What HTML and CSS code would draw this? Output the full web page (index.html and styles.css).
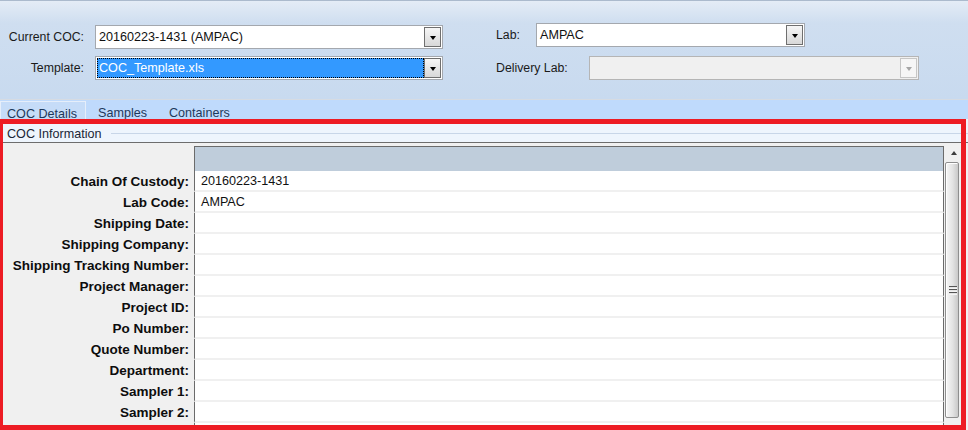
FILE: index.html
```html
<!DOCTYPE html>
<html lang="en">

<head>
    <meta charset="UTF-8">
    <title>COC Details</title>
    <link rel="stylesheet" href="styles.css">
</head>

<body>
    <div class="app">
        <div class="toolbar">
            <div class="toolbar-group group-left">
                <div class="field">
                    <label class="field-label lbl-coc">Current COC:</label>
                    <div class="combo w-coc">
                        <span class="combo-text">20160223-1431 (AMPAC)</span>
                        <span class="combo-btn"><i class="arrow"></i></span>
                    </div>
                </div>
                <div class="field">
                    <label class="field-label lbl-coc">Template:</label>
                    <div class="combo w-coc focused">
                        <span class="combo-text">COC_Template.xls</span>
                        <span class="combo-btn"><i class="arrow"></i></span>
                    </div>
                </div>
            </div>
            <div class="toolbar-group group-right">
                <div class="field">
                    <label class="field-label lbl-lab">Lab:</label>
                    <div class="combo w-lab">
                        <span class="combo-text">AMPAC</span>
                        <span class="combo-btn"><i class="arrow"></i></span>
                    </div>
                </div>
                <div class="field">
                    <label class="field-label lbl-delivery">Delivery Lab:</label>
                    <div class="combo w-delivery disabled">
                        <span class="combo-text"></span>
                        <span class="combo-btn"><i class="arrow"></i></span>
                    </div>
                </div>
            </div>
        </div>

        <!-- tabs -->
        <div class="tabs">
            <div class="tab active">COC Details</div>
            <div class="tab">Samples</div>
            <div class="tab">Containers</div>
        </div>

        <div class="group-header">
            <span>COC Information</span>
            <span class="group-line"></span>
        </div>

        <div class="sheet">
            <div class="rows">
                <div class="row head">
                    <div class="row-label"></div>
                    <div class="row-value"></div>
                </div>
                <div class="row">
                    <div class="row-label">Chain Of Custody:</div>
                    <div class="row-value">20160223-1431</div>
                </div>
                <div class="row">
                    <div class="row-label">Lab Code:</div>
                    <div class="row-value">AMPAC</div>
                </div>
                <div class="row">
                    <div class="row-label">Shipping Date:</div>
                    <div class="row-value"></div>
                </div>
                <div class="row">
                    <div class="row-label">Shipping Company:</div>
                    <div class="row-value"></div>
                </div>
                <div class="row">
                    <div class="row-label">Shipping Tracking Number:</div>
                    <div class="row-value"></div>
                </div>
                <div class="row">
                    <div class="row-label">Project Manager:</div>
                    <div class="row-value"></div>
                </div>
                <div class="row">
                    <div class="row-label">Project ID:</div>
                    <div class="row-value"></div>
                </div>
                <div class="row">
                    <div class="row-label">Po Number:</div>
                    <div class="row-value"></div>
                </div>
                <div class="row">
                    <div class="row-label">Quote Number:</div>
                    <div class="row-value"></div>
                </div>
                <div class="row">
                    <div class="row-label">Department:</div>
                    <div class="row-value"></div>
                </div>
                <div class="row">
                    <div class="row-label">Sampler 1:</div>
                    <div class="row-value"></div>
                </div>
                <div class="row">
                    <div class="row-label">Sampler 2:</div>
                    <div class="row-value"></div>
                </div>
                <div class="row">
                    <div class="row-label"></div>
                    <div class="row-value"></div>
                </div>
            </div>
            <div class="vscroll">
                <div class="vscroll-btn"><i class="arrow-up"></i></div>
                <div class="vscroll-thumb"><i class="grip"></i></div>
            </div>
        </div>

        <!-- red highlight drawn over the details panel -->
        <div class="highlight"></div>
    </div>
</body>

</html>
```

FILE: styles.css
```css
* {
    box-sizing: border-box;
    margin: 0;
    padding: 0;
}

body {
    font-family: "Liberation Sans", Arial, sans-serif;
    font-size: 12.6px;
    color: #111;
    background-color: #f0f0f0;
}

.app {
    position: relative;
    width: 968px;
    height: 430px;
    overflow: hidden;
    background-color: #f0f0f0;
}

/* Top toolbar with the combos */
.toolbar {
    display: flex;
    height: 100px;
    border-top: 1px solid #abbacd;
    border-bottom: 1px solid #d6dbe2;
    background: linear-gradient(#e4ecf6 0, #cfdef0 22px, #c8daef 100%);
}

.toolbar-group {
    display: flex;
    flex-direction: column;
}

.group-left {
    margin-left: 8px;
    padding-top: 24px;
    gap: 7px;
}

.group-right {
    margin-left: 53px;
    padding-top: 22px;
    gap: 9px;
}

.field {
    display: flex;
    align-items: center;
    height: 24px;
}

.field-label {
    font-size: 12.3px;
    color: #1a1a1a;
    white-space: nowrap;
}

.lbl-coc {
    width: 87px;
    padding-right: 11px;
    text-align: right;
}

.lbl-lab {
    width: 40px;
}

.lbl-delivery {
    width: 93px;
}

.combo {
    display: flex;
    height: 24px;
    padding: 1px;
    border: 1px solid #a4a8ae;
    background-color: #fff;
}

.w-coc {
    width: 348px;
}

.w-lab {
    width: 269px;
}

.w-delivery {
    width: 330px;
}

.combo-text {
    flex: 1;
    padding-left: 2px;
    line-height: 20px;
    white-space: nowrap;
}

.focused .combo-text {
    background-color: #3399ff;
    color: #fff;
    outline: 1px dotted #000;
    outline-offset: -1px;
}

.combo-btn {
    display: flex;
    align-items: center;
    justify-content: center;
    width: 17px;
    border: 1px solid #6f6f6f;
    background: linear-gradient(#f6f6f6, #d8d8d8);
}

.arrow {
    width: 0;
    height: 0;
    border-left: 3.5px solid transparent;
    border-right: 3.5px solid transparent;
    border-top: 4px solid #000;
    margin-top: 1px;
}

.disabled {
    background-color: #f0f0f0;
    border-color: #b5b5b5;
}

.disabled .combo-btn {
    border-color: #c6c6c6;
    background: #f6f6f6;
}

.disabled .arrow {
    border-top-color: #a6a6a6;
}

/* Tab strip */
.tabs {
    display: flex;
    align-items: flex-end;
    height: 19px;
    background-color: #bfdafc;
    color: #1e395b;
}

.tab {
    height: 18px;
    line-height: 17px;
    padding: 4px 10px 0 12px;
    white-space: nowrap;
}

.tab.active {
    width: 86px;
    padding: 4px 0 0 6px;
    border: 1px solid #e6eefa;
    border-bottom: none;
    background-color: #c6dcf8;
}

/* COC Information group */
.group-header {
    display: flex;
    align-items: center;
    height: 23px;
    padding: 6px 0 0 7px;
    background-color: #eef5fd;
    color: #1b2636;
}

.group-line {
    flex: 1;
    height: 1px;
    margin-left: 10px;
    background-color: #c8d6e8;
}

.sheet {
    display: flex;
    height: 288px;
    padding-top: 3px;
    border-top: 1px solid #6d6d6d;
    background-color: #f0f0f0;
}

.rows {
    width: 944px;
}

.row {
    display: flex;
    height: 21px;
}

.row-label {
    width: 194px;
    padding-right: 5px;
    text-align: right;
    font-size: 13.5px;
    font-weight: bold;
    line-height: 21px;
    color: #0d0d0d;
    white-space: nowrap;
}

.row-value {
    flex: 1;
    padding-left: 6px;
    line-height: 20px;
    background-color: #fff;
    border-left: 1px solid #6b6b6b;
    border-right: 1px solid #6b6b6b;
    border-bottom: 2px solid #f0f0f0;
}

.row.head {
    height: 25px;
}

.row.head .row-value {
    background-color: #bfcddb;
    border-top: 1px solid #6b6b6b;
    border-bottom: none;
}

/* Vertical scrollbar */
.vscroll {
    display: flex;
    flex-direction: column;
    width: 17px;
}

.vscroll-btn {
    display: flex;
    align-items: center;
    justify-content: center;
    height: 14px;
    padding-left: 2px;
}

.arrow-up {
    width: 0;
    height: 0;
    border-left: 3.5px solid transparent;
    border-right: 3.5px solid transparent;
    border-bottom: 4px solid #3c3c3c;
}

.vscroll-thumb {
    display: flex;
    align-items: center;
    justify-content: center;
    height: 256px;
    margin: 2px 2px 0 1px;
    border: 1px solid #8e8e8e;
    border-radius: 2px;
    background: linear-gradient(to right, #f7f7f7, #e3e3e3 55%, #c9c9c9);
    box-shadow: inset 1px 1px 0 #fff;
}

.grip {
    width: 8px;
    height: 9px;
    margin-left: 1px;
    background: repeating-linear-gradient(#555 0 1px, #e4e4e4 1px 2px, #f4f4f4 2px 3px);
}

/* Red annotation frame */
.highlight {
    position: absolute;
    left: -2px;
    top: 119px;
    width: 968px;
    height: 311px;
    border: 5px solid #ed1c24;
    pointer-events: none;
}
```
